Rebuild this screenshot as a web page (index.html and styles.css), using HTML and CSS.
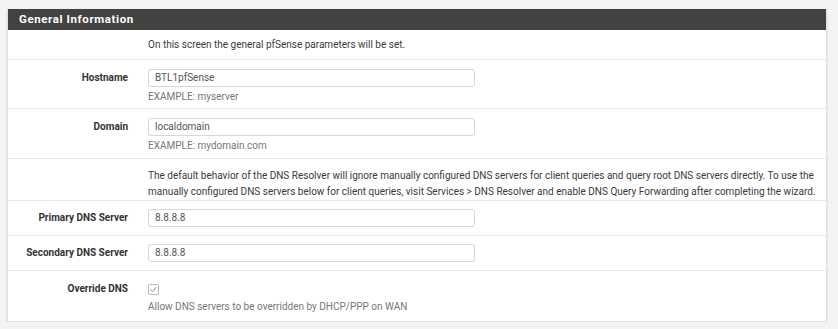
FILE: index.html
```html
<!DOCTYPE html>
<html>
<head>
<meta charset="utf-8">
<link rel="stylesheet" href="styles.css">
</head>
<body>
<div class="panel">
  <div class="panel-heading">General Information</div>
  <div class="row row-intro">
    <div class="label"></div>
    <div class="value"><div class="text">On this screen the general pfSense parameters will be set.</div></div>
  </div>
  <div class="row row-help">
    <div class="label">Hostname</div>
    <div class="value">
      <div class="input">BTL1pfSense</div>
      <div class="help">EXAMPLE: myserver</div>
    </div>
  </div>
  <div class="row">
    <div class="label">Domain</div>
    <div class="value">
      <div class="input">localdomain</div>
      <div class="help">EXAMPLE: mydomain.com</div>
    </div>
  </div>
  <div class="row row-text">
    <div class="label"></div>
    <div class="value"><div class="text">The default behavior of the DNS Resolver will ignore manually configured DNS servers for client queries and query root DNS servers directly. To use the manually configured DNS servers below for client queries, visit Services &gt; DNS Resolver and enable DNS Query Forwarding after completing the wizard.</div></div>
  </div>
  <div class="row row-single">
    <div class="label">Primary DNS Server</div>
    <div class="value"><div class="input">8.8.8.8</div></div>
  </div>
  <div class="row row-single">
    <div class="label">Secondary DNS Server</div>
    <div class="value"><div class="input">8.8.8.8</div></div>
  </div>
  <div class="row row-check">
    <div class="label">Override DNS</div>
    <div class="value">
      <svg class="check" width="11" height="11" viewBox="0 0 11 11"><rect x="0.5" y="0.5" width="10" height="10" rx="1" fill="#fff" stroke="#b8b8b8"/><path d="M2.6 5.6 L4.6 7.6 L8.4 3.2" fill="none" stroke="#8a8a8a" stroke-width="1"/></svg>
      <div class="help">Allow DNS servers to be overridden by DHCP/PPP on WAN</div>
    </div>
  </div>
</div>
</body>
</html>
```
FILE: styles.css
```css
html, body {
  margin: 0;
  padding: 0;
  background: #f3f3f3;
}
body {
  padding: 9px 11px 0 7px;
  font-family: Roboto, "Noto Sans", sans-serif;
  font-size: 10px;
  color: #3a3a3a;
}
.panel {
  background: #fff;
  border: 1px solid #e0e0e0;
  border-top: none;
  box-shadow: 0 1px 2px rgba(0,0,0,0.12);
}
.panel-heading {
  background: #424242;
  color: #fff;
  font-weight: bold;
  font-size: 11.5px;
  letter-spacing: 0.6px;
  height: 21px;
  line-height: 21px;
  padding-left: 11px;
}
.row {
  display: flex;
  align-items: flex-start;
  border-top: 1px solid #e8e8e8;
  padding: 9px 0 5px;
}
.row-intro {
  border-top: none;
  padding: 7px 0 6px;
}
.row-help {
  padding: 9px 0 4px;
}
.row-text {
  padding: 9px 0 0;
}
.row-single {
  padding: 8px 0 8px;
}
.row-check {
  padding: 9px 0 7px;
}
.label {
  width: 120px;
  padding-right: 20px;
  text-align: right;
  font-weight: bold;
  line-height: 18px;
  flex: none;
  color: #333;
}
.value {
  flex: 1;
  padding-right: 8px;
}
.text {
  line-height: 16px;
}
.input {
  width: 313px;
  height: 16px;
  line-height: 16px;
  border: 1px solid #d6d6d6;
  border-radius: 3px;
  padding: 0 6px;
  color: #555;
}
.help {
  color: #777;
  line-height: 14px;
  margin-top: 3px;
}
.check {
  display: block;
  margin-top: 4px;
  margin-bottom: 5px;
}
```
